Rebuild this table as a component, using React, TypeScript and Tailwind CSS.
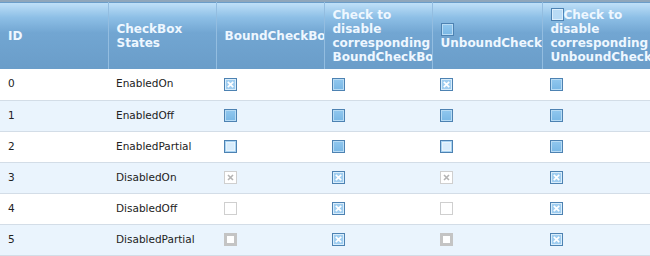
type State = 'on' | 'off' | 'partial';

interface Row {
    id: number;
    label: string;
    bound: State;
    unbound: State;
    disabled: boolean;
}

const rows: Row[] = [
    { id: 0, label: 'EnabledOn', bound: 'on', unbound: 'on', disabled: false },
    { id: 1, label: 'EnabledOff', bound: 'off', unbound: 'off', disabled: false },
    { id: 2, label: 'EnabledPartial', bound: 'partial', unbound: 'partial', disabled: false },
    { id: 3, label: 'DisabledOn', bound: 'on', unbound: 'on', disabled: true },
    { id: 4, label: 'DisabledOff', bound: 'off', unbound: 'off', disabled: true },
    { id: 5, label: 'DisabledPartial', bound: 'partial', unbound: 'partial', disabled: true },
];

function Box({ state, disabled = false }: { state: State; disabled?: boolean }) {
    if (disabled) {
        if (state === 'partial') {
            return (
                <span className="inline-flex h-[13px] w-[13px] items-center justify-center border-[3px] border-[#c4c4c4] bg-[#c4c4c4] align-middle">
                    <span className="h-[7px] w-[7px] bg-white" />
                </span>
            );
        }
        return (
            <span className="inline-flex h-[13px] w-[13px] items-center justify-center border border-[#cfcfcf] bg-white align-middle">
                {state === 'on' && (
                    <svg width="7" height="7" viewBox="0 0 7 7">
                        <path d="M1 1 L6 6 M6 1 L1 6" stroke="#b4b4b4" strokeWidth="1.6" />
                    </svg>
                )}
            </span>
        );
    }
    if (state === 'off') {
        return (
            <span className="inline-flex h-[13px] w-[13px] border border-[#4d82b2] align-middle">
                <span className="h-full w-full border border-[#b8dcf5] bg-[linear-gradient(#8fc6ee,#7bb9e6)]" />
            </span>
        );
    }
    if (state === 'partial') {
        return (
            <span className="inline-flex h-[13px] w-[13px] items-center justify-center border border-[#4d82b2] bg-[#a9d3f2] align-middle">
                <span className="h-[9px] w-[9px] border border-[#e6f3fc] bg-[#d8ecfb]" />
            </span>
        );
    }
    return (
        <span className="inline-flex h-[13px] w-[13px] border border-[#4d82b2] align-middle">
            <span className="flex h-full w-full items-center justify-center border border-[#d9edfb] bg-[#9fcdf0]">
                <svg width="7" height="7" viewBox="0 0 7 7" className="block">
                    <path d="M0.8 0.8 L6.2 6.2 M6.2 0.8 L0.8 6.2" stroke="#ffffff" strokeWidth="1.7" />
                </svg>
            </span>
        </span>
    );
}

const th =
    'overflow-hidden border-r border-[#93bde0] px-[8px] py-0 text-left align-middle font-bold text-[12px] leading-[14px] text-[#eef7ff]';

export default function App() {
    return (
        <div className="h-[256px] w-[650px] overflow-hidden bg-white font-['DejaVu_Sans',Verdana,sans-serif]">
            <table className="w-[650px] table-fixed border-collapse">
                <colgroup>
                    <col className="w-[108px]" />
                    <col className="w-[108px]" />
                    <col className="w-[108px]" />
                    <col className="w-[108px]" />
                    <col className="w-[110px]" />
                    <col className="w-[108px]" />
                </colgroup>
                <thead>
                    <tr className="h-[68px] border-t-2 border-[#8fa6ba] bg-[linear-gradient(#bfe0f8_0%,#8dbfe6_22%,#72a6d2_45%,#6a9dc9_100%)]">
                        <th className={th}>ID</th>
                        <th className={th}>
                            CheckBox
                            <br />
                            States
                        </th>
                        <th className={`${th} whitespace-nowrap`}>BoundCheckBox</th>
                        <th className={th}>Check to disable corresponding BoundCheckBox</th>
                        <th className={th}>
                            <Box state="off" /> UnboundCheckBox
                        </th>
                        <th className={`${th} border-r-0`}>
                            <span className="inline-flex h-[13px] w-[13px] items-center justify-center border border-[#4d82b2] align-[-1px]">
                                <span className="h-full w-full border border-[#dbeefc] bg-[#b9dbf5]" />
                            </span>
                            Check to disable corresponding UnboundCheckBox
                        </th>
                    </tr>
                </thead>
                <tbody className="text-[10.5px] text-[#222]">
                    {rows.map((r) => (
                        <tr
                            key={r.id}
                            className={`h-[31px] border-b border-[#d3dde7] ${r.id % 2 === 1 ? 'bg-[#eaf4fd]' : 'bg-white'}`}
                        >
                            <td className="px-[8px] align-middle">{r.id}</td>
                            <td className="px-[8px] align-middle">{r.label}</td>
                            <td className="px-[8px] align-middle leading-none">
                                <Box state={r.bound} disabled={r.disabled} />
                            </td>
                            <td className="px-[8px] align-middle leading-none">
                                <Box state={r.disabled ? 'on' : 'off'} />
                            </td>
                            <td className="px-[8px] align-middle leading-none">
                                <Box state={r.unbound} disabled={r.disabled} />
                            </td>
                            <td className="px-[8px] align-middle leading-none">
                                <Box state={r.disabled ? 'on' : 'off'} />
                            </td>
                        </tr>
                    ))}
                </tbody>
            </table>
        </div>
    );
}
